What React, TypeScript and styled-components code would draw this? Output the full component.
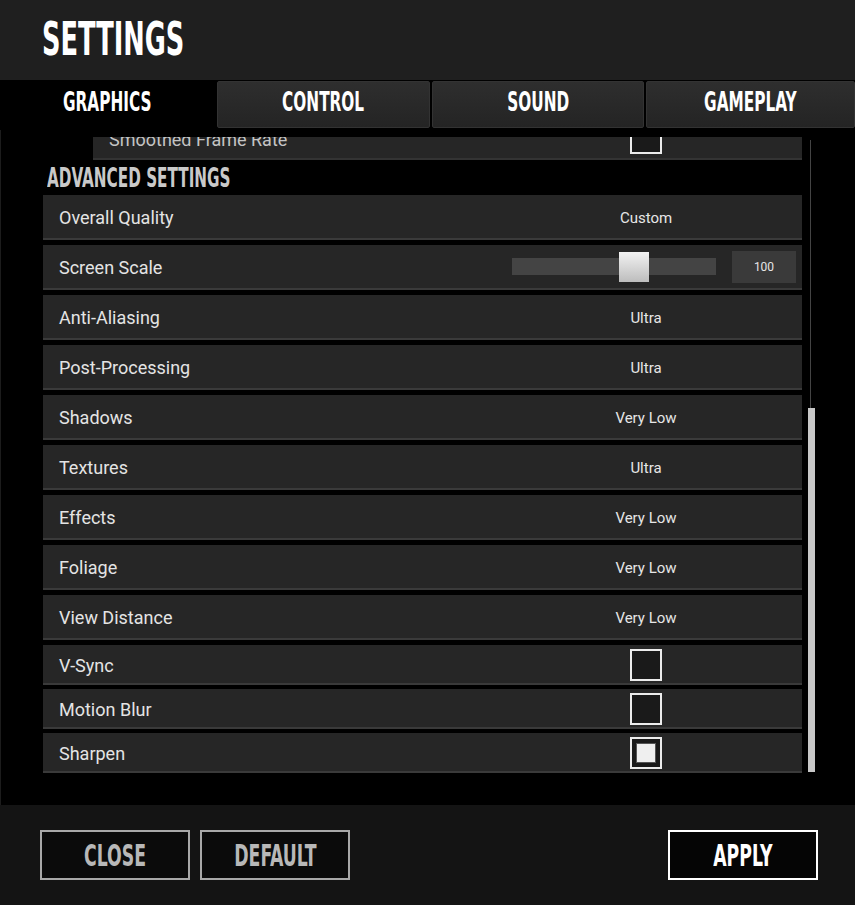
import styled, { createGlobalStyle } from "styled-components";

const GlobalStyle = createGlobalStyle`
  html, body {
    margin: 0;
    padding: 0;
    background: #000;
  }
  * {
    box-sizing: border-box;
  }
`;

const display = `"DejaVu Sans Condensed", "DejaVu Sans", sans-serif`;
const body = `"Roboto", "DejaVu Sans Condensed", sans-serif`;

type Option = { label: string; value: string };

const selectRows: Option[] = [
  { label: "Anti-Aliasing", value: "Ultra" },
  { label: "Post-Processing", value: "Ultra" },
  { label: "Shadows", value: "Very Low" },
  { label: "Textures", value: "Ultra" },
  { label: "Effects", value: "Very Low" },
  { label: "Foliage", value: "Very Low" },
  { label: "View Distance", value: "Very Low" },
];

const toggles = [
  { label: "V-Sync", on: false },
  { label: "Motion Blur", on: false },
  { label: "Sharpen", on: true },
];

const tabs = ["GRAPHICS", "CONTROL", "SOUND", "GAMEPLAY"];

const App = () => {
  return (
    <>
      <GlobalStyle />
      <Window>
        <Header>
          <Title>SETTINGS</Title>
        </Header>
        <TabBar>
          {tabs.map((t, i) => (
            <Tab key={t} $active={i === 0}>
              <TabText>{t}</TabText>
            </Tab>
          ))}
        </TabBar>
        <Content>
          <Viewport>
            <List>
              <SubRow>
                <PartialLabel>Smoothed Frame Rate</PartialLabel>
                <ValueCell>
                  <Check />
                </ValueCell>
              </SubRow>
              <Section>
                <SectionText>ADVANCED SETTINGS</SectionText>
              </Section>
              <Row>
                <Label>Overall Quality</Label>
                <ValueCell>Custom</ValueCell>
              </Row>
              <Row>
                <Label>Screen Scale</Label>
                <SliderWrap>
                  <Track>
                    <Thumb />
                  </Track>
                  <NumBox>100</NumBox>
                </SliderWrap>
              </Row>
              {selectRows.map((r) => (
                <Row key={r.label}>
                  <Label>{r.label}</Label>
                  <ValueCell>{r.value}</ValueCell>
                </Row>
              ))}
              <Toggles>
                {toggles.map((t) => (
                  <ToggleRow key={t.label}>
                    <Label>{t.label}</Label>
                    <ValueCell>
                      <Check>{t.on && <CheckFill />}</Check>
                    </ValueCell>
                  </ToggleRow>
                ))}
              </Toggles>
            </List>
          </Viewport>
          <Scroll>
            <ScrollThumb />
          </Scroll>
        </Content>
        <Footer>
          <FooterButton>
            <ButtonText>CLOSE</ButtonText>
          </FooterButton>
          <FooterButton>
            <ButtonText>DEFAULT</ButtonText>
          </FooterButton>
          <Spacer />
          <FooterButton $primary>
            <ButtonText>APPLY</ButtonText>
          </FooterButton>
        </Footer>
      </Window>
    </>
  );
};

const Window = styled.div`
  width: 855px;
  height: 905px;
  display: flex;
  flex-direction: column;
  background: #000;
  overflow: hidden;
`;

const Header = styled.div`
  height: 80px;
  background: #1f1f1f;
  padding-left: 42px;
  padding-bottom: 2px;
  display: flex;
  align-items: center;
`;

const Title = styled.div`
  font-family: ${display};
  font-weight: bold;
  font-size: 46px;
  line-height: 1;
  color: #fff;
  transform: scaleX(0.62);
  transform-origin: left center;
`;

const TabBar = styled.div`
  height: 50px;
  display: grid;
  grid-template-columns: 215px 213px 212px 1fr;
  gap: 2px;
  padding: 1px 0 2px 0;
  background: #000;
`;

const Tab = styled.div<{ $active?: boolean }>`
  display: flex;
  align-items: center;
  justify-content: center;
  border-radius: 2px;
  padding-bottom: 6px;
  background: ${(p) =>
    p.$active ? "#000" : "linear-gradient(#2e2e2e, #242424)"};
  border: 1px solid ${(p) => (p.$active ? "#000" : "#333")};
`;

const TabText = styled.span`
  display: inline-block;
  font-family: ${display};
  font-weight: bold;
  font-size: 27px;
  line-height: 1;
  color: #fff;
  transform: scaleX(0.63);
`;

const Content = styled.div`
  flex: 1;
  display: flex;
  padding-left: 42px;
  background: #000;
  border-left: 1px solid #1c1c1c;
`;

const Viewport = styled.div`
  width: 759px;
  margin-top: 7px;
  height: 636px;
  overflow: hidden;
`;

const List = styled.div`
  display: flex;
  flex-direction: column;
  margin-top: -22px;
`;

const Row = styled.div`
  height: 45px;
  margin-bottom: 5px;
  display: flex;
  align-items: center;
  justify-content: space-between;
  background: #262626;
  border-bottom: 2px solid #3a3a3a;
  padding-left: 16px;
`;

const SubRow = styled(Row)`
  margin-left: 50px;
  margin-bottom: 0;
  border-bottom-color: #333;
`;

const Toggles = styled.div`
  display: flex;
  flex-direction: column;
  gap: 4px;
`;

const ToggleRow = styled(Row)`
  height: 40px;
  margin-bottom: 0;
`;

const Label = styled.div`
  font-family: ${body};
  font-size: 18px;
  color: #e4e4e4;
  padding-top: 2px;
`;

const PartialLabel = styled(Label)`
  color: #c4c4c4;
  padding-top: 6px;
`;

const ValueCell = styled.div`
  width: 312px;
  display: flex;
  justify-content: center;
  align-items: center;
  font-family: ${body};
  font-size: 15px;
  color: #e6e6e6;
  padding-top: 2px;
`;

const SliderWrap = styled.div`
  display: flex;
  align-items: center;
  gap: 16px;
  padding-right: 6px;
`;

const Track = styled.div`
  position: relative;
  width: 204px;
  height: 17px;
  background: #444;
`;

const Thumb = styled.div`
  position: absolute;
  left: 107px;
  top: -6px;
  width: 30px;
  height: 30px;
  background: linear-gradient(#f2f2f2, #bdbdbd);
`;

const NumBox = styled.div`
  width: 64px;
  height: 32px;
  background: #3a3a3a;
  display: flex;
  align-items: center;
  justify-content: center;
  font-family: ${body};
  font-size: 12px;
  color: #e6e6e6;
`;

const Check = styled.div`
  width: 32px;
  height: 32px;
  border: 2px solid #ececec;
  background: #1a1a1a;
  display: flex;
  align-items: center;
  justify-content: center;
`;

const CheckFill = styled.div`
  width: 20px;
  height: 20px;
  background: #efefef;
  border: 1px solid #555;
`;

const Section = styled.div`
  height: 35px;
  padding-left: 4px;
  display: flex;
  align-items: center;
`;

const SectionText = styled.span`
  display: inline-block;
  font-family: ${display};
  font-weight: bold;
  font-size: 27px;
  line-height: 1;
  color: #c9c9c9;
  transform: scaleX(0.627);
  transform-origin: left center;
`;

const Scroll = styled.div`
  margin-left: 5px;
  margin-top: 10px;
  width: 8px;
  height: 632px;
  display: flex;
  flex-direction: column;
  justify-content: flex-end;
  align-items: center;
  background: linear-gradient(
    to right,
    transparent 3px,
    #444 3px,
    #444 4px,
    transparent 4px
  );
`;

const ScrollThumb = styled.div`
  width: 7px;
  height: 364px;
  background: #c8c8c8;
`;

const Footer = styled.div`
  height: 100px;
  background: #141414;
  display: flex;
  align-items: center;
  gap: 10px;
  padding: 0 37px 0 40px;
`;

const Spacer = styled.div`
  flex: 1;
`;

const FooterButton = styled.div<{ $primary?: boolean }>`
  width: 150px;
  height: 50px;
  display: flex;
  align-items: center;
  justify-content: center;
  color: ${(p) => (p.$primary ? "#fff" : "#b8b8b8")};
  background: ${(p) => (p.$primary ? "#050505" : "#0b0b0b")};
  border: 2px solid ${(p) => (p.$primary ? "#fff" : "#a8a8a8")};
`;

const ButtonText = styled.span`
  display: inline-block;
  font-family: ${display};
  font-weight: bold;
  font-size: 31px;
  line-height: 1;
  transform: scaleX(0.62);
`;

export default App;
